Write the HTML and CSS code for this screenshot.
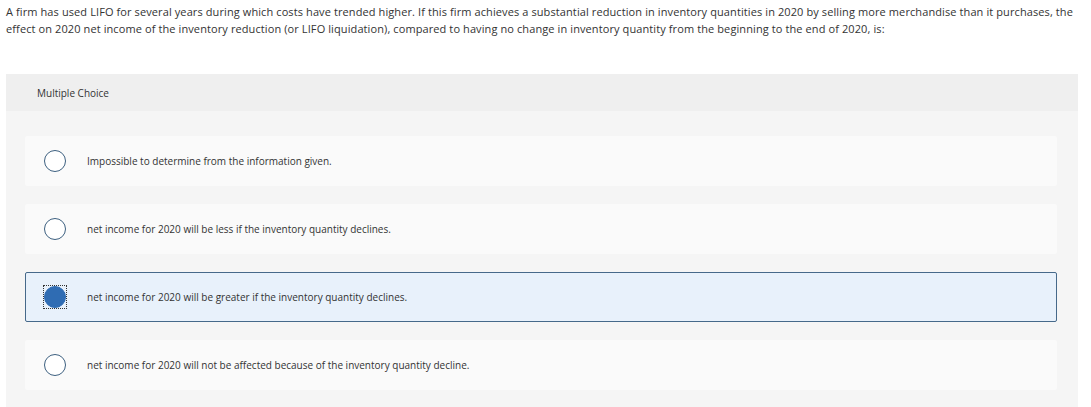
FILE: index.html
```html
<!DOCTYPE html>
<html>
<head>
<meta charset="utf-8">
<link rel="stylesheet" href="styles.css">
</head>
<body>
<p class="question">A firm has used LIFO for several years during which costs have trended higher. If this firm achieves a substantial reduction in inventory quantities in 2020 by selling more merchandise than it purchases, the effect on 2020 net income of the inventory reduction (or LIFO liquidation), compared to having no change in inventory quantity from the beginning to the end of 2020, is:</p>
<div class="panel">
  <div class="panel-head">Multiple Choice</div>
  <div class="options">
    <div class="option"><span class="radio"></span><span class="label">Impossible to determine from the information given.</span></div>
    <div class="option"><span class="radio"></span><span class="label">net income for 2020 will be less if the inventory quantity declines.</span></div>
    <div class="option selected"><span class="radio-wrap"><span class="radio checked"></span></span><span class="label">net income for 2020 will be greater if the inventory quantity declines.</span></div>
    <div class="option"><span class="radio"></span><span class="label">net income for 2020 will not be affected because of the inventory quantity decline.</span></div>
  </div>
</div>
</body>
</html>
```
FILE: styles.css
```css
html, body {
  margin: 0;
  padding: 0;
  background: #ffffff;
}
body {
  font-family: "Open Sans", "Liberation Sans", sans-serif;
  color: #333333;
}
.question {
  margin: 0;
  padding: 3px 12px 0 6px;
  font-size: 11px;
  line-height: 17px;
  letter-spacing: 0.1px;
  color: #333;
}
.panel {
  margin: 37px 13px 0 6px;
  background: #f5f5f5;
  padding-bottom: 20px;
}
.panel-head {
  background: #efefef;
  height: 37px;
  line-height: 38px;
  padding-left: 31px;
  font-size: 10px;
  color: #333;
}
.options {
  display: flex;
  flex-direction: column;
  gap: 18px;
  padding: 25px 21px 0 19px;
}
.option {
  display: flex;
  align-items: center;
  height: 50px;
  box-sizing: border-box;
  background: #fafafa;
  padding-left: 18px;
  border: 1px solid transparent;
  border-radius: 2px;
}
.option.selected {
  background: #e8f1fb;
  border-color: #46698a;
}
.radio {
  width: 22px;
  height: 22px;
  box-sizing: border-box;
  border: 1.5px solid #3d6080;
  border-radius: 50%;
  background: #fff;
  flex: none;
}
.radio-wrap {
  display: flex;
  outline: 1px dotted #333;
  outline-offset: 0;
  flex: none;
}
.radio.checked {
  background: #2f6cb3;
  border-color: #2f6cb3;
}
.label {
  margin-left: 21px;
  font-size: 10px;
  color: #333;
}
```
